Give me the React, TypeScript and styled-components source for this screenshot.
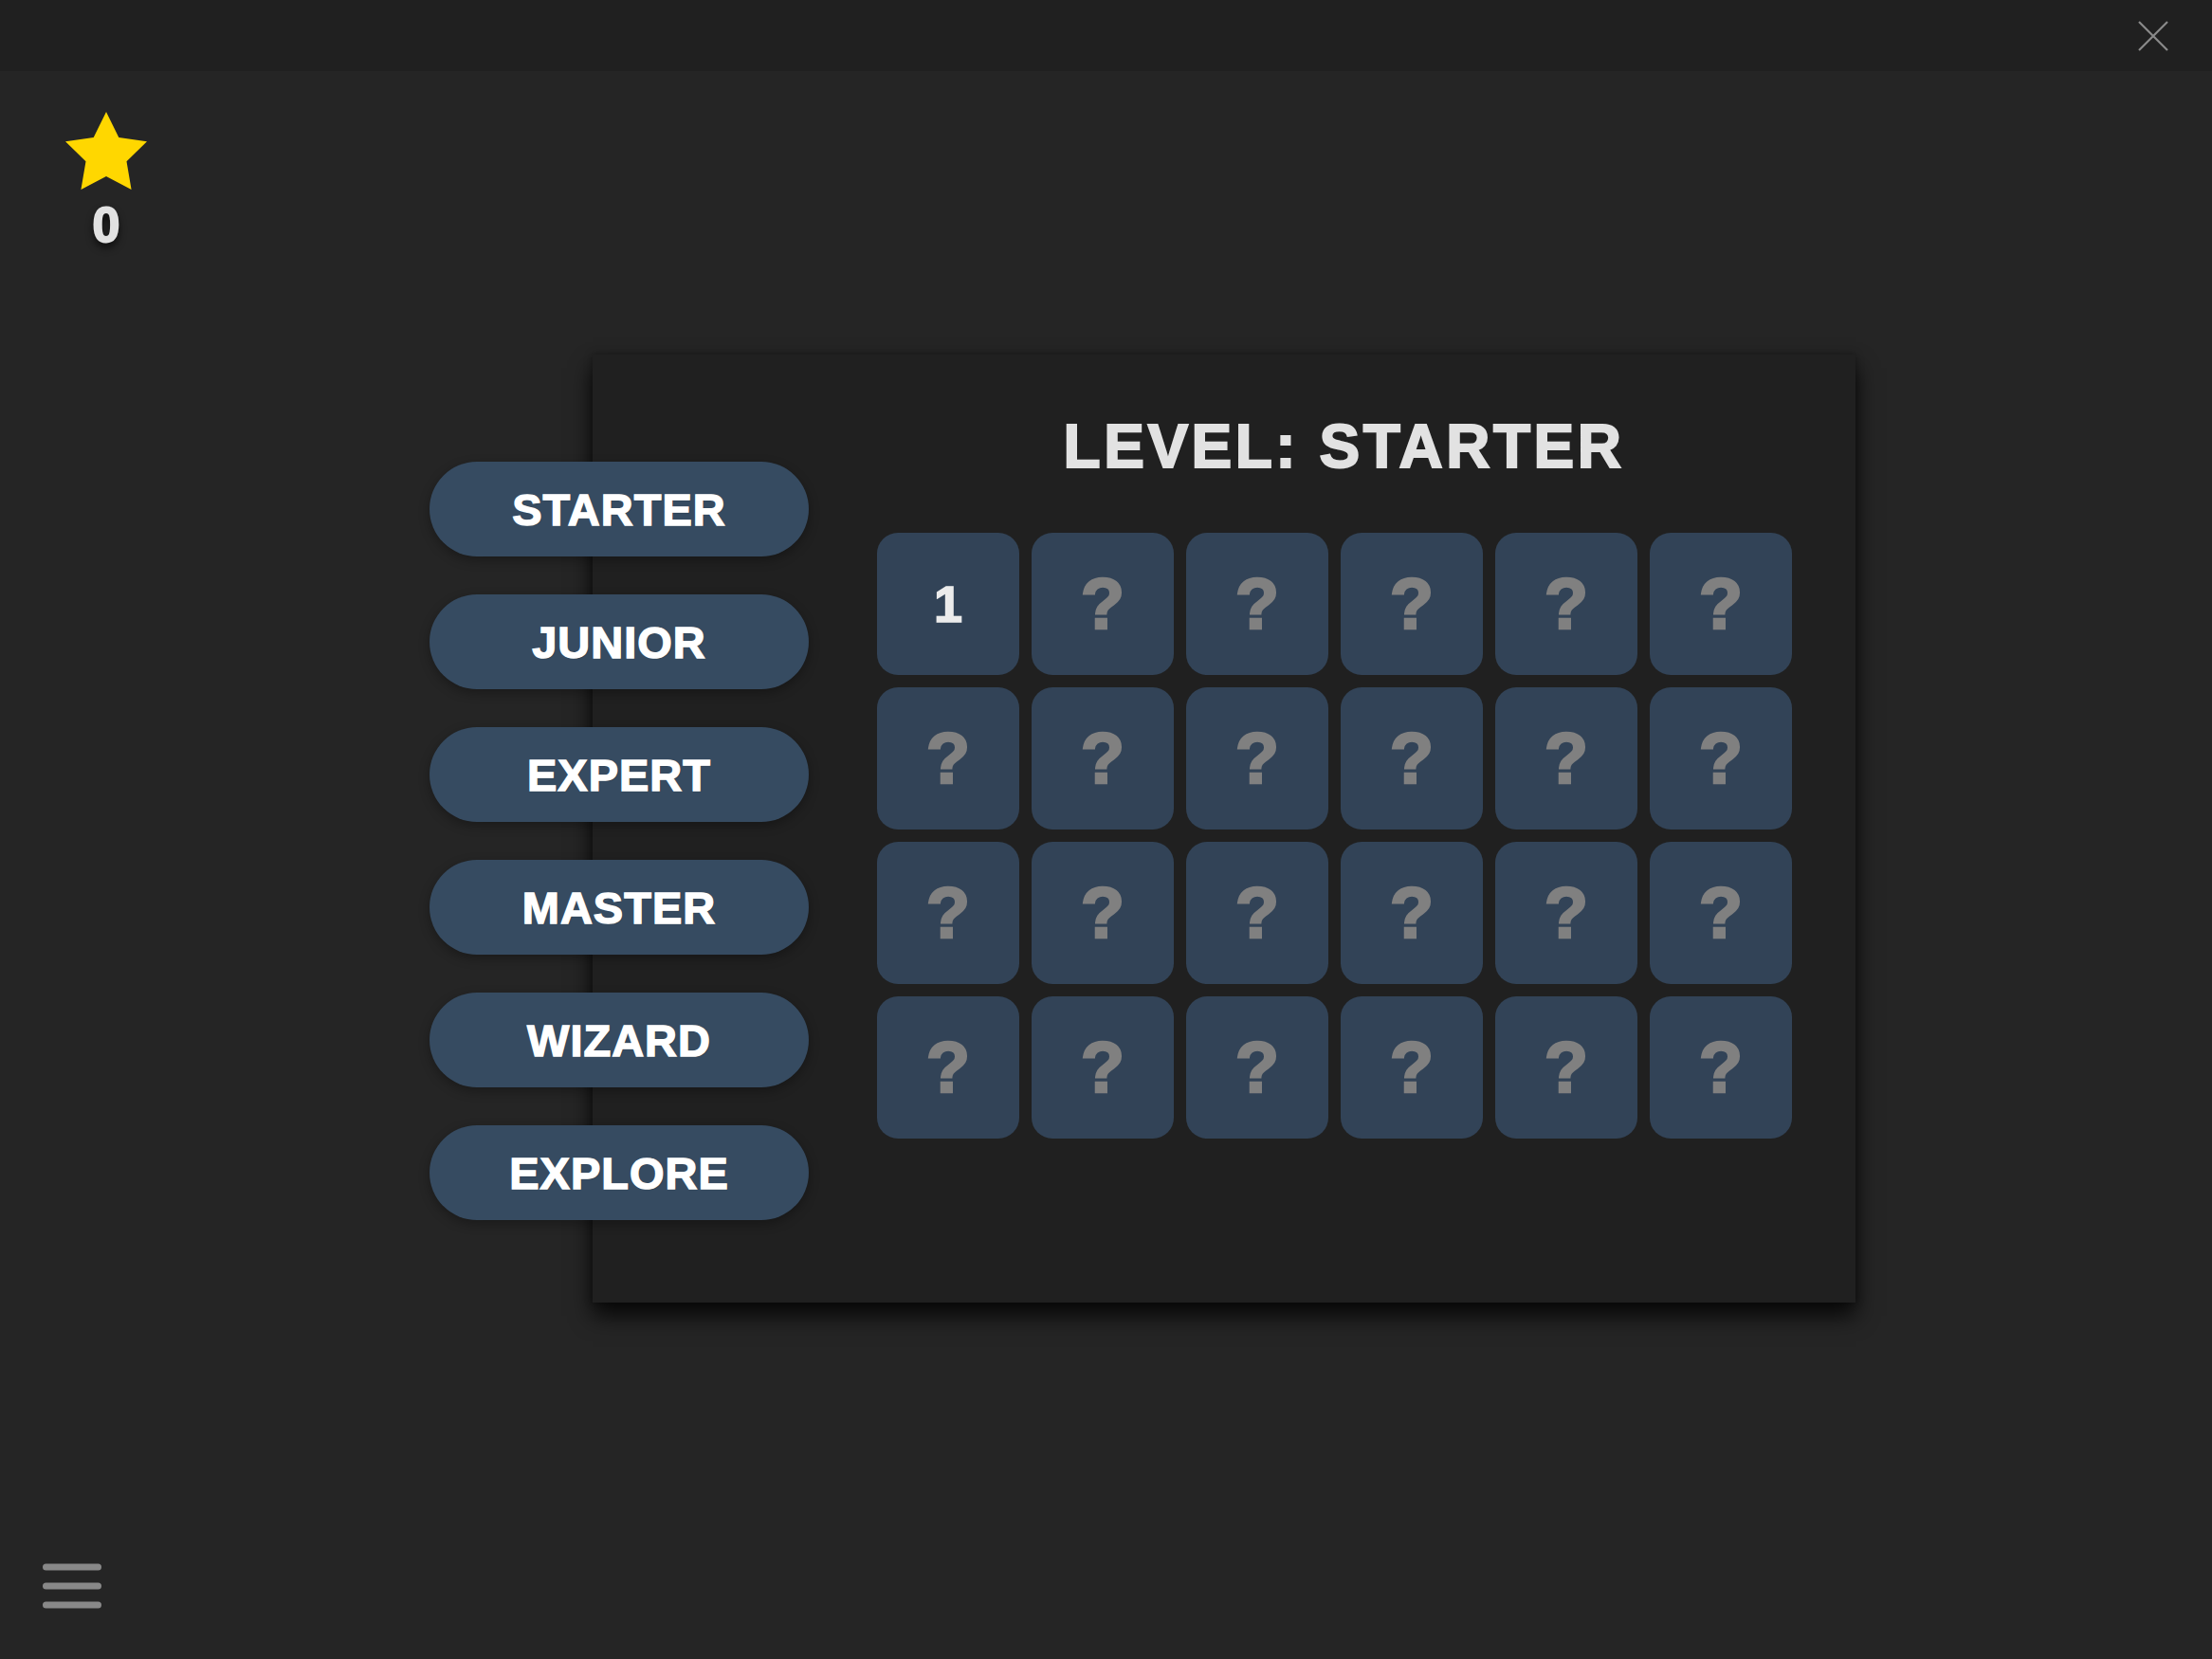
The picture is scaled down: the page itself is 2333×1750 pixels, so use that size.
import React from "react";
import styled, { createGlobalStyle } from "styled-components";

const GlobalStyle = createGlobalStyle`
  html, body {
    margin: 0;
    padding: 0;
    background: #252525;
    font-family: "Liberation Sans", Arial, sans-serif;
  }
`;

const levels = ["STARTER", "JUNIOR", "EXPERT", "MASTER", "WIZARD", "EXPLORE"];

const Page = styled.div`
  height: 100vh;
  display: flex;
  flex-direction: column;
  overflow: hidden;
`;

const TopBar = styled.div`
  height: 75px;
  flex-shrink: 0;
  background: #202020;
  display: flex;
  justify-content: flex-end;
  align-items: center;
  padding-right: 44px;
`;

const CloseButton = styled.button`
  width: 36px;
  height: 36px;
  padding: 0;
  border: none;
  background: transparent;
  display: flex;
  align-items: center;
  justify-content: center;
  cursor: pointer;
`;

const Score = styled.div`
  width: 86px;
  margin: 43px 0 0 69px;
  display: flex;
  flex-direction: column;
  align-items: center;
`;

const ScoreValue = styled.div`
  margin-top: 11px;
  font-size: 52px;
  line-height: 1;
  font-weight: 700;
  color: #e2e2e2;
  -webkit-text-stroke: 2px #e2e2e2;
  text-shadow: 0 5px 8px rgba(0, 0, 0, 0.8);
`;

const Stage = styled.div`
  display: flex;
  align-items: flex-start;
  margin-top: 111px;
  padding-left: 453px;
`;

const LevelMenu = styled.div`
  position: relative;
  z-index: 2;
  width: 400px;
  flex-shrink: 0;
  margin: 113px -228px 0 0;
  display: flex;
  flex-direction: column;
  gap: 40px;
`;

const LevelButton = styled.button`
  height: 100px;
  border: none;
  border-radius: 50px;
  background: #364b61;
  color: #ffffff;
  font-family: "Liberation Sans", Arial, sans-serif;
  font-size: 47px;
  font-weight: 700;
  letter-spacing: 1px;
  -webkit-text-stroke: 1.4px #ffffff;
  text-shadow: 1px 1px 1px rgba(0, 0, 0, 0.25);
  box-shadow: 0 4px 12px rgba(0, 0, 0, 0.3);
  display: flex;
  align-items: center;
  justify-content: center;
  cursor: pointer;
`;

const Panel = styled.div`
  width: 1332px;
  height: 1000px;
  flex-shrink: 0;
  box-sizing: border-box;
  background: #202020;
  padding: 65px 0 0 300px;
  box-shadow: 0 14px 22px rgba(0, 0, 0, 0.8), 0 0 8px rgba(0, 0, 0, 0.35);
`;

const PanelBody = styled.div`
  width: 985px;
  display: flex;
  flex-direction: column;
  align-items: center;
`;

const Title = styled.h1`
  margin: 0;
  font-size: 64px;
  line-height: 64px;
  font-weight: 700;
  letter-spacing: 3.5px;
  color: #e2e2e2;
  -webkit-text-stroke: 2px #e2e2e2;
`;

const TileGrid = styled.div`
  align-self: flex-start;
  margin-top: 59px;
  display: grid;
  grid-template-columns: repeat(6, 150px);
  grid-auto-rows: 150px;
  gap: 13px;
`;

const Tile = styled.div<{ $open?: boolean }>`
  border-radius: 22px;
  background: #324357;
  display: flex;
  align-items: center;
  justify-content: center;
  font-weight: 700;
  line-height: 1;
  font-size: ${(p) => (p.$open ? "54px" : "76px")};
  color: ${(p) => (p.$open ? "#ececec" : "#808080")};
  -webkit-text-stroke: ${(p) => (p.$open ? "1.5px #ececec" : "2.5px #808080")};
`;

const Footer = styled.div`
  margin-top: auto;
  padding: 0 0 50px 42px;
`;

const MenuButton = styled.button`
  width: 68px;
  height: 54px;
  padding: 0;
  border: none;
  background: transparent;
  display: flex;
  cursor: pointer;
`;

const Star = () => (
  <svg width="86" height="82" viewBox="2 2 20 19.02">
    <polygon
      points="12,2 15.09,8.26 22,9.27 17,14.14 18.18,21.02 12,17.77 5.82,21.02 7,14.14 2,9.27 8.91,8.26"
      fill="#ffd700"
    />
  </svg>
);

const App = () => {
  const tiles = Array.from({ length: 24 }, (_, i) => i);

  return (
    <Page>
      <GlobalStyle />
      <TopBar>
        <CloseButton aria-label="close">
          <svg width="34" height="34" viewBox="0 0 34 34">
            <path d="M2 2 L32 32 M32 2 L2 32" stroke="#8a8a8a" strokeWidth="2.2" />
          </svg>
        </CloseButton>
      </TopBar>

      <Score>
        <Star />
        <ScoreValue>0</ScoreValue>
      </Score>

      <Stage>
        <LevelMenu>
          {levels.map((level) => (
            <LevelButton key={level}>{level}</LevelButton>
          ))}
        </LevelMenu>
        <Panel>
          <PanelBody>
            <Title>LEVEL: STARTER</Title>
            <TileGrid>
              {tiles.map((i) =>
                i === 0 ? (
                  <Tile key={i} $open>
                    1
                  </Tile>
                ) : (
                  <Tile key={i}>?</Tile>
                )
              )}
            </TileGrid>
          </PanelBody>
        </Panel>
      </Stage>

      <Footer>
        <MenuButton aria-label="menu">
          <svg width="68" height="54" viewBox="0 0 68 54">
            <g stroke="#888888" strokeWidth="7" strokeLinecap="round">
              <line x1="6.5" y1="7" x2="61.5" y2="7" />
              <line x1="6.5" y1="27" x2="61.5" y2="27" />
              <line x1="6.5" y1="47" x2="61.5" y2="47" />
            </g>
          </svg>
        </MenuButton>
      </Footer>
    </Page>
  );
};

export default App;
